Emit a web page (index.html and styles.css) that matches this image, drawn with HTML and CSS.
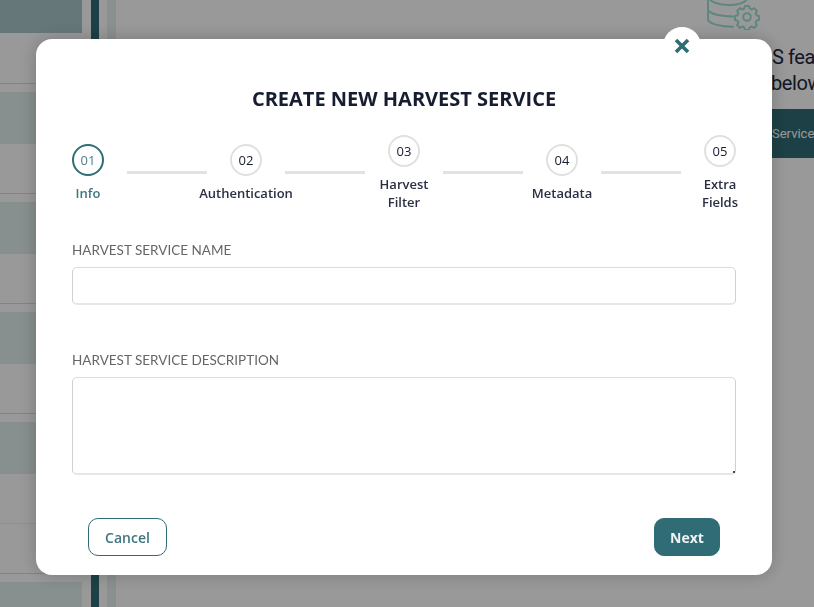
FILE: index.html
```html
<!DOCTYPE html>
<html lang="en">
<head>
<meta charset="utf-8">
<title>Create new harvest service</title>
<link rel="stylesheet" href="styles.css">
</head>
<body>
<div class="page">
  <aside class="side">
    <div class="side-list">
      <div class="side-top"></div>
      <div class="side-body"></div>
      <div class="side-band"></div>
      <div class="side-body"></div>
      <div class="side-band"></div>
      <div class="side-body"></div>
      <div class="side-band"></div>
      <div class="side-body"></div>
      <div class="side-band"></div>
      <div class="side-body side-body-faint"></div>
      <div class="side-body"></div>
      <div class="side-band"></div>
    </div>
    <div class="side-bar"></div>
    <div class="side-track"></div>
  </aside>
  <main class="main">
    <svg class="db-icon" width="56" height="30" viewBox="0 0 56 30" fill="none" aria-hidden="true">
      <g class="db-stroke">
        <path d="M1 -8V20C3 24 14 26.700 26 26.700"/>
        <path d="M1 10C3 14 14 16.500 26 16.500"/>
        <path d="M1 -4C2 2 12 5 22 5C30 5 38 3 41 -2"/>
        <g transform="translate(1.500 .5)">
          <path d="M36.500 5.500h4l.8 2.600 1.900.8 2.400-1.300 2.800 2.800-1.300 2.400.8 1.900 2.600.8v4l-2.600.8-.8 1.900 1.300 2.400-2.800 2.800-2.400-1.300-1.900.8-.8 2.600h-4l-.8-2.600-1.900-.8-2.400 1.300-2.800-2.800 1.300-2.400-.8-1.900-2.600-.8v-4l2.600-.8.8-1.900-1.300-2.400 2.800-2.800 2.400 1.300 1.900-.8z"/>
          <circle cx="38.500" cy="16.500" r="3.800"/>
        </g>
      </g>
    </svg>
    <p class="notice">S features<br><span class="notice-below">below</span></p>
    <div class="add-service">Service</div>
  </main>
</div>

<div class="overlay">
  <section class="modal">
    <button class="close" type="button" aria-label="Close">
      <svg width="16" height="16" viewBox="0 0 16 16" aria-hidden="true"><path class="close-x" d="M2 2L14 14M14 2L2 14"/></svg>
    </button>
    <h1 class="title">CREATE NEW HARVEST SERVICE</h1>
    <div class="steps">
      <div class="step step-active"><span class="step-num">01</span><span class="step-label">Info</span></div>
      <div class="step-line"></div>
      <div class="step"><span class="step-num">02</span><span class="step-label">Authentication</span></div>
      <div class="step-line"></div>
      <div class="step"><span class="step-num">03</span><span class="step-label">Harvest<br>Filter</span></div>
      <div class="step-line"></div>
      <div class="step"><span class="step-num">04</span><span class="step-label">Metadata</span></div>
      <div class="step-line"></div>
      <div class="step"><span class="step-num">05</span><span class="step-label">Extra<br>Fields</span></div>
    </div>
    <label class="field-label field-label-first" for="svc-name">HARVEST SERVICE NAME</label>
    <input class="field field-input" id="svc-name" type="text">
    <label class="field-label field-label-second" for="svc-desc">HARVEST SERVICE DESCRIPTION</label>
    <textarea class="field field-area" id="svc-desc"></textarea>
    <div class="actions">
      <button class="btn btn-cancel" type="button">Cancel</button>
      <button class="btn btn-next" type="button">Next</button>
    </div>
  </section>
</div>
</body>
</html>
```

FILE: styles.css
```css
* { box-sizing: border-box; }
html, body { margin: 0; height: 100%; overflow: hidden; background: #fff; }
body { font-family: "Open Sans", sans-serif; }

.page { display: flex; height: 607px; overflow: hidden; background: #fff; }

.side { display: flex; flex: none; width: 116px; height: 607px; }
.side-list { width: 82px; flex: none; }
.side-top { height: 33px; margin-bottom: 1px; background: #aac6cb; }
.side-body { height: 50px; border-bottom: 1px solid #d9dddd; }
.side-body-faint { border-bottom-color: #eceeee; }
.side-band { height: 52px; margin-top: 8px; background: #e2eeee; }
.side-bar { width: 8px; margin-left: 9px; margin-right: 8px; flex: none; background: #306c75; }
.side-track { width: 9px; flex: none; background: #e6f0f0; }

.main { flex: 1; min-width: 0; padding-left: 591px; white-space: nowrap; }
.db-icon { display: block; }
.db-stroke { stroke: #9ee0d6; stroke-width: 2; stroke-linecap: round; stroke-linejoin: round; }
.notice { margin: 14px 0 0; padding-left: 65px; font: 20px/26px Roboto, sans-serif; letter-spacing: -.4px; color: #1d2741; }
.notice-below { margin-left: -1px; }
.add-service { margin: 13px 0 0 65px; height: 49px; background: #306c75; color: #fff; font: 13px/49px Roboto, sans-serif; }

.overlay { position: fixed; inset: 0; background: rgba(0, 0, 0, .4); }
.modal {
  position: relative;
  display: flex;
  flex-direction: column;
  width: 736px;
  height: 536px;
  margin: 39px 0 0 36px;
  padding: 46px 36px 19px;
  border-radius: 16px;
  background: #fff;
  box-shadow: 0 0 18px rgba(0, 0, 0, .22);
}
.close {
  position: absolute;
  top: -12px;
  left: 627px;
  display: flex;
  align-items: center;
  justify-content: center;
  width: 38px;
  height: 38px;
  padding: 0;
  border: 0;
  border-radius: 50%;
  background: #fff;
}
.close-x { fill: none; stroke: #306c75; stroke-width: 3.600; }

.title { margin: 0; font-size: 20px; line-height: 28px; font-weight: 700; text-align: center; color: #161d30; }

.steps { display: flex; align-items: center; justify-content: space-between; height: 76px; margin-top: 22px; }
.step { display: flex; flex-direction: column; align-items: center; width: 32px; flex: none; }
.step-num {
  display: flex;
  align-items: center;
  justify-content: center;
  width: 32px;
  height: 32px;
  border: 2px solid #e0e0e0;
  border-radius: 50%;
  font-size: 13px;
  color: #161d30;
}
.step-label {
  margin-top: 8px;
  font-size: 13px;
  line-height: 18px;
  font-weight: 600;
  white-space: nowrap;
  text-align: center;
  color: #2a3042;
}
.step-active .step-num { border-color: #306c75; color: #4a7f89; }
.step-active .step-label { color: #3f7680; }
.step-line { width: 80px; height: 3px; margin-bottom: 1px; flex: none; background: #e2e2e2; }

.field-label { display: block; font-family: Lato, sans-serif; font-size: 13.500px; line-height: 20px; color: #666; }
.field-label-first { margin-top: 29px; }
.field-label-second { margin-top: 45px; }
.field {
  display: block;
  width: 664px;
  margin-top: 7px;
  border: 1px solid #d0d0d0;
  border-top-color: #dcdcdc;
  border-bottom: 2px solid #e6e6e6;
  border-radius: 5px;
  background: #fff;
  outline: 0;
}
.field-input { height: 38px; }
.field-area { height: 98px; resize: vertical; }
.field-area::-webkit-resizer { background: linear-gradient(#444, #444) no-repeat right bottom / 2px 2px; }

.actions { display: flex; justify-content: space-between; margin-top: 43px; padding: 0 16px; }
.btn { height: 38px; padding: 0; border-radius: 10px; font-family: "Open Sans", sans-serif; font-size: 14px; font-weight: 600; }
.btn-cancel { width: 79px; border: 1px solid #306c75; background: #fff; color: #3f7680; }
.btn-next { width: 66px; border: 1px solid #306c75; background: #306c75; color: #eef4f5; font-weight: 700; }
```
